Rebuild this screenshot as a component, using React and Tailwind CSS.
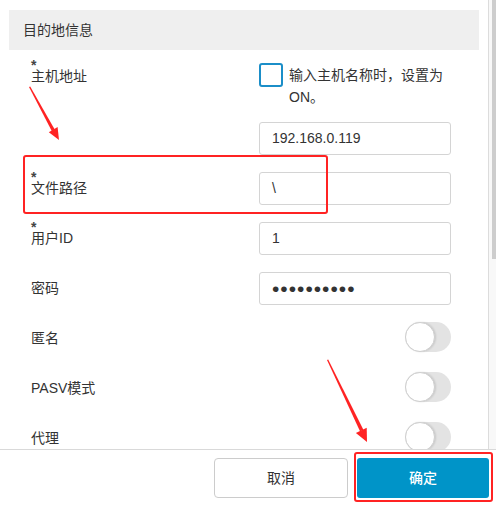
import React from "react";

const font = "font-['Liberation_Sans','Noto_Sans_CJK_SC',sans-serif]";

function Label({ star, children }) {
  return (
    <div className="w-[228px] shrink-0 flex flex-col mt-[2px]">
      <div className="h-[6px] leading-[6px] text-[14px] font-bold text-[#444] overflow-visible">
        {star ? "*" : ""}
      </div>
      <div className="leading-[16px] text-[14px] text-[#333]">{children}</div>
    </div>
  );
}

function InputBox({ children }) {
  return (
    <div className="w-[192px] h-[33px] border border-[#d4d4d4] rounded-[3px] px-[12px] flex items-center text-[14px] text-[#333] bg-white">
      {children}
    </div>
  );
}

function Toggle() {
  return (
    <div className="w-[46px] h-[30px] rounded-full bg-[#e3e3e3] flex items-center">
      <div className="w-[30px] h-[30px] rounded-full bg-white border border-[#cfcfcf] shadow-[1px_0_2px_rgba(0,0,0,0.12)]" />
    </div>
  );
}

function Row({ star, label, children, first }) {
  return (
    <div className={`flex items-start h-[33px] ${first ? "mt-[14px]" : "mt-[17px]"}`}>
      {label !== undefined ? <Label star={star}>{label}</Label> : <div className="w-[228px] shrink-0" />}
      {children}
    </div>
  );
}

export default function App() {
  return (
    <div className={`relative w-[496px] h-[505px] overflow-hidden bg-white ${font}`}>
      <div className="flex h-[449px] overflow-hidden">
        <div className="w-[488px] shrink-0 overflow-hidden">
          <div className="mx-[9px] mt-[10px] h-[40px] bg-[#efefef] flex items-center px-[14px] text-[14px] text-[#333]">
            目的地信息
          </div>
          <div className="pl-[31px]">
            <div className="flex items-start mt-[10px]">
              <Label star>主机地址</Label>
              <div className="flex items-start gap-[6px]">
                <div className="mt-[3px] w-[24px] h-[24px] border-2 border-[#1b8ec8] rounded-[3px] bg-white shrink-0" />
                <div className="mt-[4px] w-[162px] leading-[22px] text-[14px] text-[#333]">
                  输入主机名称时，设置为ON。
                </div>
              </div>
            </div>
            <Row first>
              <InputBox>192.168.0.119</InputBox>
            </Row>
            <Row star label="文件路径">
              <InputBox>\</InputBox>
            </Row>
            <Row star label="用户ID">
              <InputBox>1</InputBox>
            </Row>
            <Row label="密码">
              <InputBox>
                <span className="text-[21px] leading-none tracking-[1px] text-[#333]">••••••••••</span>
              </InputBox>
            </Row>
            <Row label="匿名">
              <div className="w-[192px] flex justify-end">
                <Toggle />
              </div>
            </Row>
            <Row label="PASV模式">
              <div className="w-[192px] flex justify-end">
                <Toggle />
              </div>
            </Row>
            <Row label="代理">
              <div className="w-[192px] flex justify-end">
                <Toggle />
              </div>
            </Row>
          </div>
        </div>
        <div className="w-[8px] h-full border-l border-[#dcdcdc] bg-[#f8f8f8] flex justify-end">
          <div className="w-[4px] h-[259px] bg-[#cdcdcd]" />
        </div>
      </div>
      <div className="h-[56px] border-t border-[#d9d9d9] flex justify-end gap-[9px] pr-[7px] pt-[8px]">
        <button className="w-[134px] h-[40px] border border-[#cccccc] rounded-[4px] bg-white text-[14px] text-[#333]">
          取消
        </button>
        <button className="w-[132px] h-[40px] rounded-[3px] bg-[#0094c8] text-[14px] text-white font-medium">
          确定
        </button>
      </div>

      {/* annotations */}
      <div className="absolute left-[23px] top-[155px] w-[305px] h-[59px] border-[2.5px] border-[#ff2323] rounded-[3px] pointer-events-none" />
      <div className="absolute left-[354px] top-[452px] w-[139px] h-[50px] border-[2.5px] border-[#ff2323] rounded-[3px] pointer-events-none" />
      <svg className="absolute left-0 top-0 pointer-events-none" width="496" height="505" viewBox="0 0 496 505">
        <polygon points="29,87 30.2,86.5 55,130 52,131.6" fill="#ff2323" />
        <polygon points="59,140 48.8,132.2 57.6,127" fill="#ff2323" />
        <polygon points="327,360 328.2,359.6 363.5,430 360,431.3" fill="#ff2323" />
        <polygon points="367,442 355.9,433 366.7,427.7" fill="#ff2323" />
      </svg>
    </div>
  );
}
